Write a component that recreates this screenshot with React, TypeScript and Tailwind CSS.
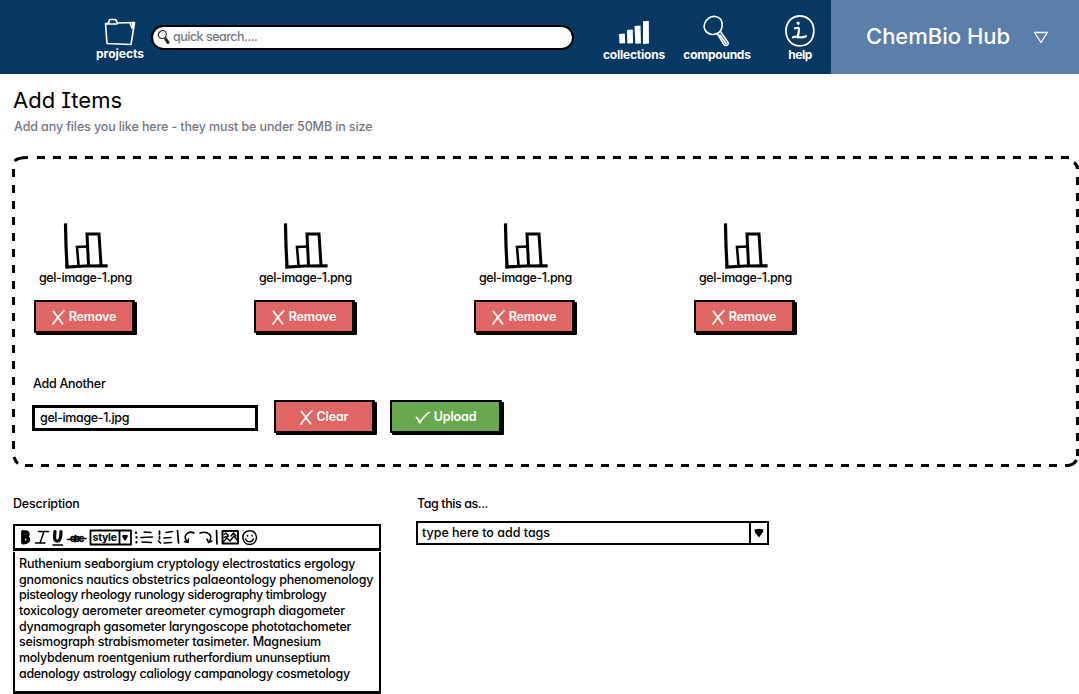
import type { ReactNode } from "react";

const files = ["gel-image-1.png", "gel-image-1.png", "gel-image-1.png", "gel-image-1.png"];

const lines: [string, string][] = [
  ["Ruthenium seaborgium cryptology electrostatics ergology", "tracking-[-0.2px]"],
  ["gnomonics nautics obstetrics palaeontology phenomenology", "tracking-[-0.215px]"],
  ["pisteology rheology runology siderography timbrology", "tracking-[-0.34px]"],
  ["toxicology aerometer areometer cymograph diagometer", "tracking-[-0.2px]"],
  ["dynamograph gasometer laryngoscope phototachometer", "tracking-[-0.25px]"],
  ["seismograph strabismometer tasimeter. Magnesium", "tracking-[-0.21px]"],
  ["molybdenum roentgenium rutherfordium ununseptium", "tracking-[-0.27px]"],
  ["adenology astrology caliology campanology cosmetology", "tracking-[-0.31px]"],
];

function FolderIcon() {
  return (
    <svg width="32" height="28" viewBox="0 0 32 28" fill="none" stroke="#fff" strokeWidth="1.6" strokeLinejoin="round" strokeLinecap="round">
      <path d="M1.5 5.5 L3 25.5 L27 26.5 L30.5 4.5 L13.5 5 L11.5 1.500 L5.500 1.500 L4.500 5 Z M1.500 5.800 L13 6 M26 5 L28 10 L29 5" />
    </svg>
  );
}

function BarsIcon() {
  return (
    <svg width="32" height="26" viewBox="0 0 32 26" fill="#fff">
      <path d="M1 13 6.800 12.500 7.200 22.300 1.500 22.500ZM9 9 14.800 8.500 15 22.300 9.300 22.500ZM16.500 5 22.500 4.500 23 22.600 17.300 22.700ZM25 .3 30.800 0 31 22.600 25 22.900Z" />
    </svg>
  );
}

function SearchIcon({ size, color, stroke }: { size: number; color: string; stroke: number }) {
  return (
    <svg width={size} height={size} viewBox="0 0 32 32" fill="none" stroke={color} strokeWidth={stroke} strokeLinejoin="round" strokeLinecap="round">
      <path d="M8 3 C11.500.5 17 1 19.500 4 C22.500 8 21.500 14.500 18 17.500 C13 21 6.500 19.500 4 15 C2 11 3.500 6 8 3Z" />
      <path d="M16.500 19 L23 29.500 C24.500 31.500 28 30 27 27.500 L19.500 16.500 M19 20 L25 28.500" />
    </svg>
  );
}

function InfoIcon() {
  return (
    <svg width="30" height="32" viewBox="0 0 30 32" fill="none" stroke="#fff" strokeWidth="1.800" strokeLinecap="round" strokeLinejoin="round">
      <path d="M14 1 C6 1.500 1 8 1 16 C1.200 25 7 30.800 15 30.800 C24 30.800 29 24 28.800 15 C28.500 6.500 22.500.7 14 1Z" />
      <path d="M13 8 L13.300 8.300" strokeWidth="3" />
      <path d="M10 13.300 C13 12.500 14.500 12.500 14 15 L12.700 22.500 M8 22.300 C12 20 14.500 24.500 21 21.200" strokeWidth="2.200" />
    </svg>
  );
}

function ChartIcon() {
  return (
    <svg width="46" height="48" viewBox="0 0 46 48" fill="none" stroke="#000" strokeLinecap="square" strokeLinejoin="miter">
      <path d="M2.500 3 L3 24 L4 44.500" strokeWidth="3.200" />
      <path d="M4 45 L22 44 L43 43.800" strokeWidth="3.200" />
      <path d="M15.500 43 L14 25 L23.500 24.500" strokeWidth="2.600" />
      <path d="M25.500 43 L24 12 L36 12 L38 43" strokeWidth="3" />
    </svg>
  );
}

function CrossIcon() {
  return (
    <svg width="13" height="15" viewBox="0 0 13 15" fill="none" stroke="#fff" strokeWidth="1.700" strokeLinecap="round">
      <path d="M1.500 1.500 C4 5 8 10 10.500 13.800 M11.800.9 C8.500 4 4 9.500 1 14" />
    </svg>
  );
}

function CheckIcon() {
  return (
    <svg width="16" height="13" viewBox="0 0 16 13" fill="#fff">
      <path d="M.3 6 2 5.500 5 9.500 C8 5.500 11 2.500 14.700.2 L15.400.9 C11 4.500 7.500 8.500 5.200 12.600 L4 12.600 C3 10 2 8 .3 6Z" />
    </svg>
  );
}

function NavItem({ icon, label, className }: { icon: ReactNode; label: string; className: string }) {
  return (
    <div className={`flex flex-col items-center ${className}`}>
      <div className="flex h-8 items-end">{icon}</div>
      <span className="text-[12px] leading-4 font-bold whitespace-nowrap text-white">{label}</span>
    </div>
  );
}

function SketchButton({ children, className }: { children: ReactNode; className: string }) {
  return (
    <button
      className={`flex h-[33px] items-center justify-center rounded-[1px] border-2 border-r-[3px] border-black pt-px text-[12.5px] leading-4 font-semibold tracking-[-0.15px] text-white shadow-[2px_2px_0_#000] ${className}`}
    >
      {children}
    </button>
  );
}

function DashedOutline() {
  return (
    <svg className="absolute inset-0" width="1067" height="311" viewBox="0 0 1067 311" fill="none" stroke="#000" strokeWidth="3">
      <path d="M25 1.500 H1058 M13 309.500 H1056 M1.500 13 V300 M1065.500 21 V300" strokeDasharray="8 8" />
      <path d="M2.500 5 C4.500 2.500 8 1.500 16 1.500 M1062 6.500 C1064 8 1065.500 10 1065.500 13 M2 301 C3 304 4 306 6 307.500 M1056 309.500 C1060 309 1063 307 1064.500 304" />
    </svg>
  );
}

function Toolbar() {
  return (
    <svg width="240" height="20" viewBox="18 528 240 20" fill="none" stroke="#000" strokeWidth="1.500" strokeLinecap="round" strokeLinejoin="round">
      <path d="M23 532 V542.500 M23 532.500 C29.500 530.500 29 536 24 537 C30 536 30 543 23 542.500" strokeWidth="3.800" />
      <path d="M38.500 531.500 H48.500 M35.500 543 H45 M44 531.500 L40 543" />
      <path d="M55 531.500 C54 541 55 541.500 58 541 C60.500 540.500 61 537 61 531.500" strokeWidth="3.200" />
      <path d="M53 545 H62.500 M67.500 539.500 L86 538.500" strokeWidth="1.500" />
      <text x="70" y="542" fill="#000" stroke="#000" strokeWidth=".3" textLength="14" className="text-[9.500px] font-bold">abc</text>
      <path d="M90.500 530.500 H131 V544.500 H90.500Z M119.500 530.500 V544.500" strokeWidth="1.800" />
      <text x="92.500" y="540.500" fill="#000" stroke="none" textLength="24.500" className="text-[10.500px] font-bold">style</text>
      <path d="M123 536 H127 L125 539.500Z" fill="#000" strokeWidth="1.800" />
      <path d="M136 532.500 V533 M136.500 537 V537.500 M136.500 542 V542.500" strokeWidth="2.200" />
      <path d="M144 532 L151 532.500 M141 537.500 L152.500 537 M142 542 L151.500 542.500 M166 532.500 L172.500 531.500 M164 538 L171 537.500 M164 543 L171.500 542.500" />
      <path d="M159.500 531 V534.500 M159.500 536.500 V539 M158.500 541 L160.500 543 M177.500 530.500 L178.500 543 M216.500 530.500 L217 544" strokeWidth="1.700" />
      <path d="M194 533 C189 530.500 181.500 535 187.500 542 M184.500 541.500 L188 542.500 L188.500 539" />
      <path d="M200 533 C207 530.500 214 535 209 542 M207 539 L208.500 542.500 L212 541" />
      <path d="M222.500 531 H238 V543.500 H222.500Z" strokeWidth="1.900" />
      <path d="M223 542 L227 538 L230 541 L234 536 L238 541 M224 534.500 L226 533 L228.500 536 L224 537.500 M231 536 L233.500 533 L236 536" strokeWidth="1.400" />
      <path d="M249.500 530.800 C245 531 242.500 534 243 538 C243.500 542.500 246 544.500 250 544.500 C254 544.300 256.500 541 256.500 537 C256 533 253.500 530.700 249.500 530.800Z M245.500 539 C247.500 543 252 542.500 253.500 539 M247.500 535.500 V536 M252 535.500 V536" />
    </svg>
  );
}

export default function App() {
  return (
    <div className="h-[694px] w-[1079px] overflow-hidden bg-white font-['Inter','Liberation_Sans',sans-serif] text-[12.5px] leading-4 font-[450] text-black [font-feature-settings:'cv11','cv08']">
      <header className="flex h-[74px] bg-[#073763]">
        <div className="flex w-[831px] items-start pt-[14px]">
          <NavItem className="ml-[94px] w-[52px]" icon={<FolderIcon />} label="projects" />
          <div className="mt-[11px] ml-[5px] flex h-[25px] w-[423px] items-center rounded-full border-2 border-black bg-white pb-0.5 pl-1">
            <SearchIcon size={14} color="#222" stroke={2.500} />
            <span className="ml-[2px] tracking-[-0.5px] text-[#77777f]">quick search....</span>
          </div>
          <NavItem className="ml-[27px] w-[66px] pt-px tracking-[-0.2px]" icon={<BarsIcon />} label="collections" />
          <NavItem className="ml-[15px] w-[70px] pt-px tracking-[-0.25px]" icon={<SearchIcon size={32} color="#fff" stroke={1.600} />} label="compounds" />
          <NavItem className="ml-[31px] w-[34px] pt-px tracking-[-0.5px]" icon={<InfoIcon />} label="help" />
        </div>
        <div className="flex flex-1 items-center bg-[#5b7faa] pl-[35px] text-white">
          <span className="w-[150px] pb-[3px] text-[22px] leading-7 whitespace-nowrap">ChemBio Hub</span>
          <svg className="ml-[17px]" width="16" height="13" viewBox="0 0 16 13" fill="none" stroke="#fff" strokeWidth="1.300" strokeLinejoin="round">
            <path d="M1.500 1.500 L14.500 1.300 L8 11.500Z" />
          </svg>
        </div>
      </header>

      <main className="pl-3">
        <h1 className="pt-3 pl-px text-[22px] leading-7 font-normal">Add Items</h1>
        <p className="mt-[5px] pl-0.5 tracking-[-0.12px] text-[#77777f]">Add any files you like here - they must be under 50MB in size</p>

        <section className="relative mt-[21px] h-[311px] w-[1067px] pl-5">
          <DashedOutline />
          <div className="flex pt-[66px]">
            {files.map((name, i) => (
              <div key={i} className="w-[220px]">
                <div className="ml-[31px]"><ChartIcon /></div>
                <div className="pl-[7px] tracking-[-0.4px]">{name}</div>
                <SketchButton className="mt-[14px] ml-[2px] w-[101px] gap-[4px] bg-[#e06666]">
                  <CrossIcon /> Remove
                </SketchButton>
              </div>
            ))}
          </div>
          <div className="mt-[43px] pl-px tracking-[-0.27px]">Add Another</div>
          <div className="mt-[8px] flex">
            <div className="mt-[5px] flex h-[26px] w-[226px] items-center border-[3px] border-black pl-[5px] tracking-[-0.36px]">gel-image-1.jpg</div>
            <SketchButton className="ml-4 w-[101px] gap-[4px] bg-[#e06666]"><CrossIcon /> Clear</SketchButton>
            <SketchButton className="ml-[15px] w-[112px] gap-[3px] bg-[#6aa84f]"><CheckIcon /> Upload</SketchButton>
          </div>
        </section>

        <div className="flex pt-[29px]">
          <div className="ml-px w-[368px]">
            <div className="tracking-[-0.18px]">Description</div>
            <div className="mt-[12px] flex h-[27px] items-center border-2 border-b-[3px] border-black pt-px pl-[3px]"><Toolbar /></div>
            <div className="mt-px h-[142px] border-x-[2.500px] border-x-black border-b-[3px] border-b-black pt-1 pl-1">
              {lines.map(([text, tracking]) => (
                <div key={text} className={`h-[15.700px] leading-4 whitespace-nowrap ${tracking}`}>{text}</div>
              ))}
            </div>
          </div>
          <div className="ml-[35px] w-[353px]">
            <div className="pl-px tracking-[-0.42px]">Tag this as...</div>
            <div className="mt-[9px] flex h-[24px] border-2 border-black">
              <div className="flex flex-1 items-center pl-1">type here to add tags</div>
              <div className="flex w-[18px] items-center justify-center border-l-2 border-black">
                <svg width="10" height="10" viewBox="0 0 10 10"><path d="M.5 1.500 L5 .8 L9.500 1.500 L9 4 L5 9.500 L1 4.500Z" /></svg>
              </div>
            </div>
          </div>
        </div>
      </main>
    </div>
  );
}
